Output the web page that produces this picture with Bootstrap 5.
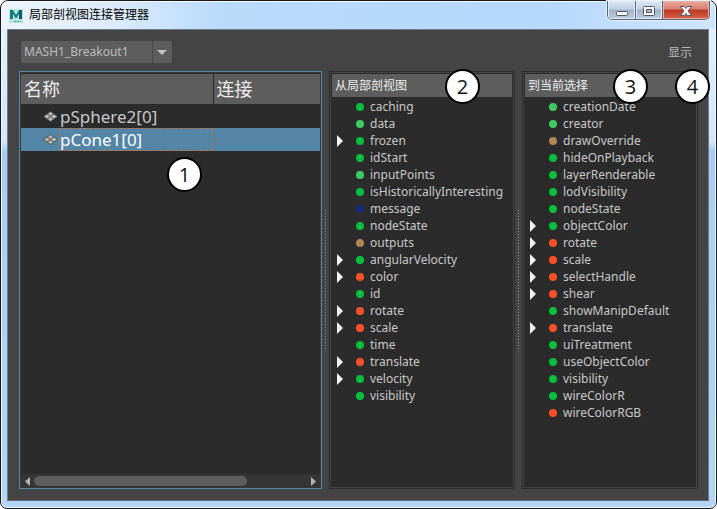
<!DOCTYPE html>
<html lang="zh-CN">
<head>
<meta charset="utf-8">
<meta name="viewport" content="width=device-width, initial-scale=1">
<title>局部剖视图连接管理器</title>
<link href="https://cdn.jsdelivr.net/npm/bootstrap@5.3.0/dist/css/bootstrap.min.css" rel="stylesheet">
<style>
  body { font-family: "Noto Sans", "Noto Sans CJK SC", sans-serif; font-size: 12px; line-height: 17px; color: #c8c8c8; background: #fff; }
  button { font: inherit; color: inherit; }
  .win { border: 1px solid #16181c; border-radius: 8px 8px 7px 7px; background: linear-gradient(180deg, #e8f2fd 0, #d3e6fb 140px, #a9cdf2 150px, #b5d5f7 100%); box-shadow: inset 0 0 0 1px #f0f8ff; padding: 0 7px 7px 6px; }
  .titlebar { height: 28px; margin: 0 -6px 0 -5px; padding-left: 7px; border-radius: 7px 7px 0 0; background: linear-gradient(90deg, #edf4fc 0, #dcebfb 16%, #bbdbfb 30%, #b5d8fc 75%, #cfe5fc 100%); color: #000; box-shadow: inset 0 1px 0 #f4faff; }
  .title { font-size: 12px; margin: 0 0 0 6px; line-height: 28px; font-weight: 400; }
  .caption-btns { height: 19px; border: 1px solid #56657a; border-top: 0; border-radius: 0 0 5px 5px; overflow: hidden; margin-right: 5px; box-shadow: 0 0 0 1px #e7f2fe; }
  .caption-btns button { border: 0; padding: 0; width: 27px; background: linear-gradient(#dbe6f3 0, #c2d0e0 45%, #9fb2c9 50%, #bccde0 100%); box-shadow: inset 0 0 0 1px #e3edf8; }
  .caption-btns button + button { border-left: 1px solid #56657a; }
  .caption-btns .closer { width: 47px; background: linear-gradient(#e9a99b 0, #d9806f 45%, #bd3721 50%, #d5644b 100%); box-shadow: inset 0 0 0 1px #e9b0a4; }
  .client { background: #444; border: 1px solid #6d7c8c; border-bottom-color: #5d6874; padding: 11px 10px 11px 11px; }
  .combo { width: 151px; height: 22px; margin-left: 2px; background: #5d5d5d; border-radius: 2px; overflow: hidden; }
  .combo select { appearance: none; border: 0; outline: 0; width: 100%; height: 22px; padding: 0 22px 0 3px; background: transparent; color: #bdbdbd; font-size: 12px; line-height: 22px; }
  .combo svg { right: 0; top: 0; pointer-events: none; }
  .show-menu { border: 0; background: none; padding: 0; margin-right: 6px; color: #b9b9b9; }
  .panes { display: grid; grid-template-columns: 303fr 7px 186fr 7px 176fr; margin-top: 8px; }
  .pane { background: #2b2b2b; border: 1px solid #2b2b2b; box-shadow: inset 0 0 0 1px #444; padding: 2px; min-width: 0; }
  .pane.focused { border-color: #5285a6; padding: 2px 1px 0; box-shadow: inset 0 0 0 1px #393939; }
  .grip { align-self: center; height: 140px; width: 1px; margin: 0 auto; background: repeating-linear-gradient(#999 0 1px, transparent 1px 3px); }
  .objects { width: 100%; table-layout: fixed; font-size: 17px; line-height: 23px; }
  .objects th { height: 30px; padding: 0 3px; background: #5d5d5d; color: #eee; font-size: 18px; font-weight: 400; border-right: 1px solid #2b2b2b; }
  .objects td { height: 23px; padding: 0; }
  .objects tbody::before { content: ""; display: block; height: 1px; }
  .objects .sel td { background: #5285a6; color: #fff; }
  .objects .mesh { padding-left: 22px; line-height: 0; }
  .focus-cell { height: 23px; line-height: 21px; border: 1px dashed #c07248; margin-left: -1px; }
  .mesh-col { width: 39px; }
  .name-col { width: 153px; }
  .scroller { height: 14px; background: #353535; padding: 0 4px 0 3px; }
  .scroller button { border: 0; padding: 0; background: none; width: 6px; line-height: 0; }
  .track { margin: 0 10px 0 4px; }
  .thumb { width: 80%; height: 10px; border-radius: 5px; background: #5d5d5d; }
  .pane-head { height: 23px; padding-left: 3px; background: #5d5d5d; color: #eee; font-size: 12px; line-height: 23px; font-weight: 400; margin: 0 0 1px; }
  .attrs li { height: 17px; padding-left: 24px; white-space: nowrap; display: flex; align-items: center; }
  .attrs li::before { content: ""; width: 8px; height: 8px; border-radius: 50%; background: var(--dot); margin-right: 6px; flex: none; }
  .attrs button { order: -1; border: 0; padding: 0; background: none; width: 6px; height: 12px; margin: 0 13px 0 -19px; line-height: 0; }
  .attrs svg { display: block; }
  .g { --dot: #06bf3f; } .lg { --dot: #40cb62; } .o { --dot: #ff5029; } .br { --dot: #ae8851; } .nv { --dot: #18297c; }
  .callout { width: 35px; height: 35px; border: 2px solid #000; border-radius: 50%; background: #fff; color: #111; font: 20px/31px "Open Sans", sans-serif; text-align: center; z-index: 2; }
  .at-1 { left: 147px; top: 85px; } .at-2 { right: 34px; top: -3px; } .at-3 { right: 49px; top: -3px; } .at-4 { right: -13px; top: -3px; }
</style>
<script src="https://cdn.jsdelivr.net/npm/bootstrap@5.3.0/dist/js/bootstrap.bundle.min.js"></script>
</head>
<body>
<svg class="d-none" aria-hidden="true">
  <symbol id="tri" viewBox="0 0 6 12"><path d="M0 0v12l6-6z" fill="#f2f2f2"/></symbol>
  <symbol id="meshicon" viewBox="0 0 15 11"><path d="M7.500 0 15 5.500 7.500 11 0 5.500z" fill="#555"/><path d="M7.500 1 10 2.900 7.500 4.800 5 2.900zM4.200 3.400 6.800 5.500 4.200 7.600 1.300 5.500zM10.800 3.400 13.700 5.500 10.800 7.600 8.200 5.500zM7.500 6.200 10 8.100 7.500 10 5 8.100z" fill="#bdbdbd"/></symbol>
</svg>
<div class="win vh-100 d-flex flex-column">
  <header class="titlebar d-flex align-items-start">
    <svg class="mt-2" width="14" height="14" viewBox="0 0 14 14" aria-hidden="true"><rect width="14" height="14" fill="#b9e3df"/><path d="M1 1h3l3 5 3-5h3v9h-3V5L7.500 9h-1L4 5v5H1z" fill="#127e80"/><path d="M10 1h3v9h-3z" fill="#0b5f66"/><path d="M5 12.500h7" stroke="#36a6a3" stroke-dasharray="2 1"/></svg>
    <h1 class="title flex-grow-1">局部剖视图连接管理器</h1>
    <div class="caption-btns d-flex">
      <button type="button" aria-label="最小化"><svg width="14" height="18" viewBox="0 0 14 18"><rect x="1.500" y="9.500" width="11" height="4" rx="1" fill="#fff" stroke="#535666"/></svg></button>
      <button type="button" aria-label="最大化"><svg width="14" height="18" viewBox="0 0 14 18"><rect x="1.500" y="4.500" width="11" height="9" rx="1" fill="#fff" stroke="#535666"/><rect x="4.500" y="7.500" width="5" height="3" fill="#a8bad0" stroke="#535666"/></svg></button>
      <button type="button" class="closer" aria-label="关闭"><svg width="14" height="18" viewBox="0 0 14 18"><path d="M1.500 4.500h4L7 6.500l1.500-2h4L9 9l3.500 4.500h-4L7 11.500l-1.500 2h-4L5 9z" fill="#fff" stroke="#535666"/></svg></button>
    </div>
  </header>
  <main class="client flex-grow-1 d-flex flex-column">
    <div class="d-flex justify-content-between align-items-center">
      <div class="combo position-relative">
        <select aria-label="MASH 节点"><option>MASH1_Breakout1</option></select>
        <svg class="position-absolute" width="20" height="22" viewBox="0 0 20 22" aria-hidden="true"><path d="M0 0h1v22H0z" fill="#494949"/><path d="M5 9h10l-5 5z" fill="#c3c3c3"/></svg>
      </div>
      <button type="button" class="show-menu">显示</button>
    </div>
    <div class="panes flex-grow-1">
      <section class="pane focused position-relative d-flex flex-column">
        <table class="objects">
          <colgroup><col class="mesh-col"><col class="name-col"><col></colgroup>
          <thead><tr><th colspan="2">名称</th><th class="border-end-0">连接</th></tr></thead>
          <tbody>
            <tr><td class="mesh"><svg width="15" height="11"><use href="#meshicon"/></svg></td><td>pSphere2[0]</td><td></td></tr>
            <tr class="sel"><td class="mesh"><svg width="15" height="11"><use href="#meshicon"/></svg></td><td><div class="focus-cell">pCone1[0]</div></td><td></td></tr>
          </tbody>
        </table>
        <div class="scroller d-flex align-items-center mt-auto">
          <button type="button" aria-label="向左滚动"><svg width="5" height="9" viewBox="0 0 5 9"><path d="M5 0v9L0 4.500z" fill="#b5b5b5"/></svg></button>
          <div class="track flex-grow-1"><div class="thumb"></div></div>
          <button type="button" aria-label="向右滚动"><svg width="5" height="9" viewBox="0 0 5 9"><path d="M0 0v9l5-4.500z" fill="#b5b5b5"/></svg></button>
        </div>
        <span class="callout at-1 position-absolute">1</span>
      </section>
      <div class="grip"></div>
      <section class="pane position-relative">
        <h2 class="pane-head">从局部剖视图</h2>
        <ul class="attrs list-unstyled mb-0">
          <li class="g">caching</li>
          <li class="lg">data</li>
          <li class="g">frozen<button type="button" aria-label="展开 frozen"><svg width="6" height="12"><use href="#tri"/></svg></button></li>
          <li class="g">idStart</li>
          <li class="lg">inputPoints</li>
          <li class="g">isHistoricallyInteresting</li>
          <li class="nv">message</li>
          <li class="g">nodeState</li>
          <li class="br">outputs</li>
          <li class="g">angularVelocity<button type="button" aria-label="展开 angularVelocity"><svg width="6" height="12"><use href="#tri"/></svg></button></li>
          <li class="o">color<button type="button" aria-label="展开 color"><svg width="6" height="12"><use href="#tri"/></svg></button></li>
          <li class="g">id</li>
          <li class="o">rotate<button type="button" aria-label="展开 rotate"><svg width="6" height="12"><use href="#tri"/></svg></button></li>
          <li class="o">scale<button type="button" aria-label="展开 scale"><svg width="6" height="12"><use href="#tri"/></svg></button></li>
          <li class="g">time</li>
          <li class="o">translate<button type="button" aria-label="展开 translate"><svg width="6" height="12"><use href="#tri"/></svg></button></li>
          <li class="g">velocity<button type="button" aria-label="展开 velocity"><svg width="6" height="12"><use href="#tri"/></svg></button></li>
          <li class="g">visibility</li>
        </ul>
        <span class="callout at-2 position-absolute">2</span>
      </section>
      <div class="grip"></div>
      <section class="pane position-relative">
        <h2 class="pane-head">到当前选择</h2>
        <ul class="attrs list-unstyled mb-0">
          <li class="lg">creationDate</li>
          <li class="lg">creator</li>
          <li class="br">drawOverride</li>
          <li class="g">hideOnPlayback</li>
          <li class="g">layerRenderable</li>
          <li class="g">lodVisibility</li>
          <li class="g">nodeState</li>
          <li class="g">objectColor<button type="button" aria-label="展开 objectColor"><svg width="6" height="12"><use href="#tri"/></svg></button></li>
          <li class="o">rotate<button type="button" aria-label="展开 rotate"><svg width="6" height="12"><use href="#tri"/></svg></button></li>
          <li class="o">scale<button type="button" aria-label="展开 scale"><svg width="6" height="12"><use href="#tri"/></svg></button></li>
          <li class="o">selectHandle<button type="button" aria-label="展开 selectHandle"><svg width="6" height="12"><use href="#tri"/></svg></button></li>
          <li class="o">shear<button type="button" aria-label="展开 shear"><svg width="6" height="12"><use href="#tri"/></svg></button></li>
          <li class="g">showManipDefault</li>
          <li class="o">translate<button type="button" aria-label="展开 translate"><svg width="6" height="12"><use href="#tri"/></svg></button></li>
          <li class="g">uiTreatment</li>
          <li class="g">useObjectColor</li>
          <li class="g">visibility</li>
          <li class="g">wireColorR</li>
          <li class="o">wireColorRGB</li>
        </ul>
        <span class="callout at-3 position-absolute">3</span>
        <span class="callout at-4 position-absolute">4</span>
      </section>
    </div>
  </main>
</div>
</body>
</html>
